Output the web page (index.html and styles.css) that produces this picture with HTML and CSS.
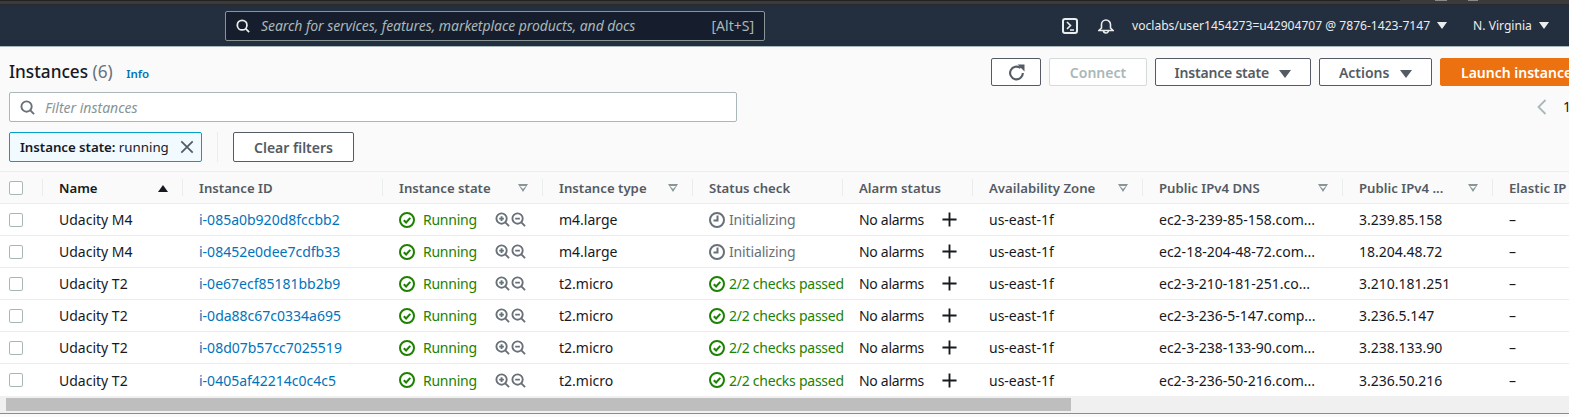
FILE: index.html
```html
<!DOCTYPE html>
<html lang="en">
<head>
  <meta charset="UTF-8">
  <title>Instances</title>
  <link rel="stylesheet" href="styles.css">
</head>
<body>
  <svg class="defs" width="0" height="0">
    <symbol id="check" viewBox="0 0 16 16"><circle cx="8" cy="8" r="7" fill="none" stroke="currentColor" stroke-width="2"/><path d="M4.8 8.2l2.3 2.3 4.2-4.6" fill="none" stroke="currentColor" stroke-width="2"/></symbol>
    <symbol id="clock" viewBox="0 0 16 16"><circle cx="8" cy="8" r="7" fill="none" stroke="currentColor" stroke-width="2"/><path d="M8.500 3.500v5h-4" fill="none" stroke="currentColor" stroke-width="2"/></symbol>
    <symbol id="zoomin" viewBox="0 0 16 16"><circle cx="7" cy="7" r="5.500" fill="none" stroke="currentColor" stroke-width="2"/><path d="M11 11l4 4M4.500 7h5M7 4.500v5" fill="none" stroke="currentColor" stroke-width="2"/></symbol>
    <symbol id="zoomout" viewBox="0 0 16 16"><circle cx="7" cy="7" r="5.500" fill="none" stroke="currentColor" stroke-width="2"/><path d="M11 11l4 4M4.500 7h5" fill="none" stroke="currentColor" stroke-width="2"/></symbol>
    <symbol id="plus" viewBox="0 0 16 16"><path d="M8 .5v15M.5 8h15" fill="none" stroke="currentColor" stroke-width="2"/></symbol>
    <symbol id="search" viewBox="0 0 16 16"><circle cx="7" cy="7" r="5.500" fill="none" stroke="currentColor" stroke-width="2"/><path d="M11 11l4 4" fill="none" stroke="currentColor" stroke-width="2"/></symbol>
  </svg>

  <div class="browser-strip">
    <span class="strip-dark"></span>
    <span class="strip-tab"></span>
    <span class="strip-tab short"></span>
  </div>

  <header class="topnav">
    <div class="search">
      <svg class="search-icon"><use href="#search"/></svg>
      <span class="search-text">Search for services, features, marketplace products, and docs</span>
      <span class="search-key">[Alt+S]</span>
    </div>
    <div class="nav-right">
      <svg class="nav-icon" viewBox="0 0 16 16"><rect x="1" y="1" width="14" height="14" rx="2" fill="none" stroke="currentColor" stroke-width="2"/><path d="M5 4l3.500 3.500L5 11M8 12h4" fill="none" stroke="currentColor" stroke-width="1.600"/></svg>
      <svg class="nav-icon bell" viewBox="0 0 16 16"><path d="M1 12.500h14l-2.500-2.500V6.500a4.500 4.500 0 0 0-9 0V10zM5.500 12.500a2.500 2.500 0 0 0 5 0" fill="none" stroke="currentColor" stroke-width="1.600"/></svg>
      <span class="nav-user">voclabs/user1454273=u42904707 @ 7876-1423-7147</span>
      <span class="nav-caret"></span>
      <span class="nav-region">N. Virginia</span>
      <span class="nav-caret"></span>
    </div>
  </header>

  <main class="panel">
    <div class="toolbar">
      <div class="toolbar-main">
        <h1 class="title">Instances <span class="count">(6)</span> <a class="info">Info</a></h1>
        <div class="filter">
          <svg class="filter-icon"><use href="#search"/></svg>
          <span>Filter instances</span>
        </div>
        <div class="tokens">
          <div class="token"><span><b>Instance state:</b> running</span>
            <svg class="token-x" viewBox="0 0 16 16"><path d="M1.500 1.500l13 13M14.500 1.500l-13 13" fill="none" stroke="currentColor" stroke-width="2"/></svg>
          </div>
          <span class="token-sep"></span>
          <button class="btn clear">Clear filters</button>
        </div>
      </div>
      <div class="toolbar-side">
        <div class="actions">
          <button class="btn refresh"><svg viewBox="0 0 16 16" width="17" height="17"><path d="M14 8.500a6 6 0 1 1-2.200-4.700" fill="none" stroke="currentColor" stroke-width="2"/><path d="M9 .5h6.500V7z" fill="currentColor"/></svg></button>
          <button class="btn connect">Connect</button>
          <button class="btn state">Instance state <i class="caret"></i></button>
          <button class="btn menu">Actions <i class="caret"></i></button>
          <button class="btn launch">Launch instances</button>
        </div>
        <div class="pager">
          <svg viewBox="0 0 10 16" width="10" height="16"><path d="M8.500 1L1.500 8l7 7" fill="none" stroke="currentColor" stroke-width="1.800"/></svg>
          <span>1</span>
        </div>
      </div>
    </div>

    <div class="grid">
      <div class="row head">
        <div class="cell c-check"><span class="checkbox"></span></div>
        <div class="cell c-name sep"><span class="sorted">Name</span><i class="sort-up"></i></div>
        <div class="cell c-id sep">Instance ID</div>
        <div class="cell c-state sep">Instance state<i class="sort"></i></div>
        <div class="cell c-type sep">Instance type<i class="sort"></i></div>
        <div class="cell c-check2 sep">Status check</div>
        <div class="cell c-alarm sep">Alarm status</div>
        <div class="cell c-az sep">Availability Zone<i class="sort"></i></div>
        <div class="cell c-dns sep">Public IPv4 DNS<i class="sort"></i></div>
        <div class="cell c-ip sep">Public IPv4 ...<i class="sort"></i></div>
        <div class="cell c-eip sep">Elastic IP</div>
      </div>

      <div class="row">
        <div class="cell c-check"><span class="checkbox"></span></div>
        <div class="cell c-name">Udacity M4</div>
        <div class="cell c-id"><a>i-085a0b920d8fccbb2</a></div>
        <div class="cell c-state"><svg class="ok"><use href="#check"/></svg><span class="running">Running</span><span class="zooms"><svg><use href="#zoomin"/></svg><svg><use href="#zoomout"/></svg></span></div>
        <div class="cell c-type">m4.large</div>
        <div class="cell c-check2 pending"><svg><use href="#clock"/></svg>Initializing</div>
        <div class="cell c-alarm"><span class="alarm-text">No alarms</span><svg class="plus"><use href="#plus"/></svg></div>
        <div class="cell c-az">us-east-1f</div>
        <div class="cell c-dns">ec2-3-239-85-158.com...</div>
        <div class="cell c-ip">3.239.85.158</div>
        <div class="cell c-eip">–</div>
      </div>
      <div class="row">
        <div class="cell c-check"><span class="checkbox"></span></div>
        <div class="cell c-name">Udacity M4</div>
        <div class="cell c-id"><a>i-08452e0dee7cdfb33</a></div>
        <div class="cell c-state"><svg class="ok"><use href="#check"/></svg><span class="running">Running</span><span class="zooms"><svg><use href="#zoomin"/></svg><svg><use href="#zoomout"/></svg></span></div>
        <div class="cell c-type">m4.large</div>
        <div class="cell c-check2 pending"><svg><use href="#clock"/></svg>Initializing</div>
        <div class="cell c-alarm"><span class="alarm-text">No alarms</span><svg class="plus"><use href="#plus"/></svg></div>
        <div class="cell c-az">us-east-1f</div>
        <div class="cell c-dns">ec2-18-204-48-72.com...</div>
        <div class="cell c-ip">18.204.48.72</div>
        <div class="cell c-eip">–</div>
      </div>
      <div class="row">
        <div class="cell c-check"><span class="checkbox"></span></div>
        <div class="cell c-name">Udacity T2</div>
        <div class="cell c-id"><a>i-0e67ecf85181bb2b9</a></div>
        <div class="cell c-state"><svg class="ok"><use href="#check"/></svg><span class="running">Running</span><span class="zooms"><svg><use href="#zoomin"/></svg><svg><use href="#zoomout"/></svg></span></div>
        <div class="cell c-type">t2.micro</div>
        <div class="cell c-check2 passed"><svg><use href="#check"/></svg>2/2 checks passed</div>
        <div class="cell c-alarm"><span class="alarm-text">No alarms</span><svg class="plus"><use href="#plus"/></svg></div>
        <div class="cell c-az">us-east-1f</div>
        <div class="cell c-dns">ec2-3-210-181-251.co...</div>
        <div class="cell c-ip">3.210.181.251</div>
        <div class="cell c-eip">–</div>
      </div>
      <div class="row">
        <div class="cell c-check"><span class="checkbox"></span></div>
        <div class="cell c-name">Udacity T2</div>
        <div class="cell c-id"><a>i-0da88c67c0334a695</a></div>
        <div class="cell c-state"><svg class="ok"><use href="#check"/></svg><span class="running">Running</span><span class="zooms"><svg><use href="#zoomin"/></svg><svg><use href="#zoomout"/></svg></span></div>
        <div class="cell c-type">t2.micro</div>
        <div class="cell c-check2 passed"><svg><use href="#check"/></svg>2/2 checks passed</div>
        <div class="cell c-alarm"><span class="alarm-text">No alarms</span><svg class="plus"><use href="#plus"/></svg></div>
        <div class="cell c-az">us-east-1f</div>
        <div class="cell c-dns">ec2-3-236-5-147.comp...</div>
        <div class="cell c-ip">3.236.5.147</div>
        <div class="cell c-eip">–</div>
      </div>
      <div class="row">
        <div class="cell c-check"><span class="checkbox"></span></div>
        <div class="cell c-name">Udacity T2</div>
        <div class="cell c-id"><a>i-08d07b57cc7025519</a></div>
        <div class="cell c-state"><svg class="ok"><use href="#check"/></svg><span class="running">Running</span><span class="zooms"><svg><use href="#zoomin"/></svg><svg><use href="#zoomout"/></svg></span></div>
        <div class="cell c-type">t2.micro</div>
        <div class="cell c-check2 passed"><svg><use href="#check"/></svg>2/2 checks passed</div>
        <div class="cell c-alarm"><span class="alarm-text">No alarms</span><svg class="plus"><use href="#plus"/></svg></div>
        <div class="cell c-az">us-east-1f</div>
        <div class="cell c-dns">ec2-3-238-133-90.com...</div>
        <div class="cell c-ip">3.238.133.90</div>
        <div class="cell c-eip">–</div>
      </div>
      <div class="row">
        <div class="cell c-check"><span class="checkbox"></span></div>
        <div class="cell c-name">Udacity T2</div>
        <div class="cell c-id"><a>i-0405af42214c0c4c5</a></div>
        <div class="cell c-state"><svg class="ok"><use href="#check"/></svg><span class="running">Running</span><span class="zooms"><svg><use href="#zoomin"/></svg><svg><use href="#zoomout"/></svg></span></div>
        <div class="cell c-type">t2.micro</div>
        <div class="cell c-check2 passed"><svg><use href="#check"/></svg>2/2 checks passed</div>
        <div class="cell c-alarm"><span class="alarm-text">No alarms</span><svg class="plus"><use href="#plus"/></svg></div>
        <div class="cell c-az">us-east-1f</div>
        <div class="cell c-dns">ec2-3-236-50-216.com...</div>
        <div class="cell c-ip">3.236.50.216</div>
        <div class="cell c-eip">–</div>
      </div>
    </div>

    <div class="scrollbar"><span class="thumb"></span></div>
  </main>
</body>
</html>
```
FILE: styles.css
```css
* {
  box-sizing: border-box;
}

html, body {
  height: 417px;
  overflow: hidden;
}

body {
  margin: 0;
  font-family: "Noto Sans", sans-serif;
  font-size: 14px;
  color: #16191f;
  background: #fafafa;
}

.defs {
  position: absolute;
}

.browser-strip {
  height: 5px;
  background: #3b3b3b;
  border-bottom: 1px solid #2a2a2a;
  display: flex;
  align-items: flex-start;
}

.strip-dark {
  width: 1400px;
  height: 1px;
  background: #222;
}

.strip-tab {
  width: 12px;
  height: 1px;
  background: #8a8a8a;
  margin-left: 35px;
}

.strip-tab.short {
  width: 10px;
  margin-left: 21px;
}

.topnav {
  height: 42px;
  background: #232f3e;
  border-bottom: 1px solid #aab7b8;
  display: flex;
  align-items: center;
  padding-left: 225px;
}

.search {
  width: 540px;
  flex: none;
  height: 30px;
  background: #161e2d;
  border: 1px solid #879596;
  border-radius: 2px;
  display: flex;
  align-items: center;
  padding: 0 10px;
  color: #aab7b8;
}

.search-icon {
  width: 14px;
  height: 14px;
  color: #eaeded;
  margin-right: 11px;
  flex: none;
}

.search-text {
  font-style: italic;
  letter-spacing: -.07px;
  flex: 1;
}

.nav-right {
  display: flex;
  flex: none;
  align-items: center;
  color: #eaeded;
  margin-left: 297px;
  white-space: nowrap;
  font-size: 12.1px;
}

.nav-icon {
  width: 16px;
  height: 16px;
  margin-right: 20px;
}

.nav-icon.bell {
  margin-right: 18px;
}

.nav-caret {
  width: 0;
  height: 0;
  border-left: 5px solid transparent;
  border-right: 5px solid transparent;
  border-top: 7px solid #eaeded;
  margin-left: 7px;
  margin-right: 26px;
}

.panel {
  height: 370px;
  overflow: hidden;
}

.toolbar {
  height: 125px;
  display: flex;
  justify-content: space-between;
  border-bottom: 1px solid #eaeded;
}

.toolbar-main {
  width: 728px;
  margin-left: 9px;
}

.title {
  margin: 0;
  height: 45px;
  padding-top: 10px;
  font-size: 17.2px;
  line-height: 30px;
  font-weight: 500;
}

.count {
  color: #687078;
  font-weight: 400;
}

.info {
  color: #0073bb;
  font-size: 11.5px;
  font-weight: 600;
  margin-left: 9px;
}

.filter {
  height: 30px;
  background: #fff;
  border: 1px solid #aab7b8;
  border-radius: 2px;
  display: flex;
  align-items: center;
  padding-left: 10px;
  color: #879596;
  font-style: italic;
}

.filter-icon {
  width: 15px;
  height: 15px;
  color: #687078;
  margin-right: 10px;
  flex: none;
}

.tokens {
  display: flex;
  align-items: center;
  margin-top: 10px;
}

.token {
  width: 193px;
  flex: none;
  height: 30px;
  background: #f1faff;
  border: 1px solid #00a1c9;
  border-radius: 2px;
  display: flex;
  align-items: center;
  justify-content: space-between;
  padding: 0 7px 0 10px;
  white-space: nowrap;
  font-size: 13.3px;
}

.token b {
  font-weight: 600;
  letter-spacing: -.05px;
}

.token-x {
  width: 14px;
  height: 14px;
  color: #545b64;
}

.token-sep {
  width: 1px;
  height: 30px;
  background: #eaeded;
  margin: 0 15px;
}

.btn {
  font-family: inherit;
  font-size: 14px;
  font-weight: 600;
  height: 28px;
  background: #fff;
  color: #545b64;
  border: 1px solid #545b64;
  border-radius: 2px;
  padding: 0;
  white-space: nowrap;
}

.clear {
  width: 121px;
  height: 30px;
}

.toolbar-side {
  width: 579px;
  flex: none;
  overflow: hidden;
}

.actions {
  display: flex;
  gap: 8px;
  padding-top: 11px;
  padding-left: 1px;
  width: 620px;
}

.refresh {
  width: 50px;
  display: flex;
  align-items: center;
  justify-content: center;
}

.connect {
  width: 98px;
  color: #aab7b8;
  border-color: #d5dbdb;
}

.state {
  width: 156px;
  letter-spacing: -.2px;
}

.menu {
  width: 113px;
}

.caret {
  display: inline-block;
  width: 0;
  height: 0;
  border-left: 6px solid transparent;
  border-right: 6px solid transparent;
  border-top: 8px solid #545b64;
  margin-left: 7px;
  vertical-align: 0;
}

.launch {
  width: 145px;
  background: #ec7211;
  color: #fff;
  border-color: #ec7211;
  text-align: left;
  padding-left: 20px;
}

.pager {
  display: flex;
  align-items: center;
  gap: 16px;
  width: 620px;
  margin-top: 11px;
  padding-left: 547px;
  color: #aab7b8;
}

.pager svg {
  flex: none;
}

.pager span {
  color: #16191f;
}

.grid {
  width: 1569px;
  overflow: hidden;
}

.row {
  display: grid;
  grid-template-columns: 42px 140px 200px 160px 150px 150px 130px 170px 200px 150px 77px;
  height: 32px;
  background: #fff;
  border-bottom: 1px solid #eaeded;
  align-items: center;
}

.row:last-child {
  border-bottom: 0;
}

.head {
  background: #fafafa;
  font-size: 13.2px;
  font-weight: 600;
  color: #545b64;
}

.head .cell {
  padding-top: 1px;
}

.cell {
  display: flex;
  align-items: center;
  white-space: nowrap;
  padding-left: 17px;
  height: 100%;
  position: relative;
}

.c-check {
  padding-left: 9px;
}

.sep::before {
  content: "";
  position: absolute;
  left: 0;
  top: 7px;
  bottom: 7px;
  width: 1px;
  background: #eaeded;
}

.sorted {
  color: #16191f;
}

.sort-up {
  position: absolute;
  right: 14px;
  top: 13px;
  border-left: 5px solid transparent;
  border-right: 5px solid transparent;
  border-top: 0;
  border-bottom: 7px solid #16191f;
}

.sort {
  position: absolute;
  right: 14px;
  top: 12px;
  width: 10px;
  height: 8px;
  background: #879596;
  clip-path: polygon(0 0, 100% 0, 50% 100%);
}

.sort::after {
  content: "";
  position: absolute;
  left: 2px;
  top: 2px;
  width: 6px;
  height: 3px;
  background: #fafafa;
  clip-path: polygon(0 0, 100% 0, 50% 100%);
}

.checkbox {
  width: 14px;
  height: 14px;
  background: #fff;
  border: 1px solid #aab7b8;
  border-radius: 2px;
}

.c-id a {
  color: #0073bb;
}

.ok,
.c-check2 svg {
  width: 16px;
  height: 16px;
  flex: none;
}

.ok {
  color: #1d8102;
  margin-right: 8px;
}

.running {
  color: #1d8102;
  letter-spacing: -.25px;
}

.zooms {
  display: flex;
  gap: 1px;
  margin-left: 18px;
  color: #687078;
}

.zooms svg {
  width: 15px;
  height: 15px;
}

.pending {
  color: #687078;
  letter-spacing: -.15px;
}

.passed {
  color: #1d8102;
  letter-spacing: -.25px;
}

.c-check2 svg {
  margin-right: 4px;
}

.alarm-text {
  letter-spacing: -.3px;
}

.plus {
  width: 15px;
  height: 15px;
  margin-left: 18px;
  color: #16191f;
}

.scrollbar {
  height: 18px;
  background: #f0f0f0;
  border-bottom: 1px solid #8c8c8c;
  padding: 2px 6px 0;
}

.thumb {
  display: block;
  width: 1065px;
  height: 13px;
  background: #bebebe;
}
```
